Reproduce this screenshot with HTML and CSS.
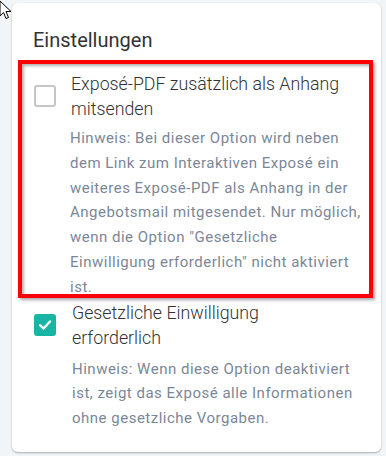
FILE: index.html
```html
<!DOCTYPE html>
<html lang="de">
<head>
    <meta charset="UTF-8">
    <meta name="viewport" content="width=device-width, initial-scale=1.0">
    <title>Einstellungen</title>
    <link rel="stylesheet" href="styles.css">
</head>
<body>
    <svg class="cursor" width="14" height="20" viewBox="0 0 14 20">
        <path d="M1 1 L1 16 L4.5 12.5 L7 18.5 L9.5 17.5 L7 11.5 L12 11.5 Z" fill="#fff" stroke="#000" stroke-width="1"/>
    </svg>

    <div class="card">
        <h2 class="card-title">Einstellungen</h2>

        <div class="option highlighted">
            <label class="option-row">
                <span class="checkbox"></span>
                <span class="option-label">Exposé-PDF zusätzlich als Anhang mitsenden</span>
            </label>
            <p class="option-hint">Hinweis: Bei dieser Option wird neben dem Link zum Interaktiven Exposé ein weiteres Exposé-PDF als Anhang in der Angebotsmail mitgesendet. Nur möglich, wenn die Option "Gesetzliche Einwilligung erforderlich" nicht aktiviert ist.</p>
        </div>

        <div class="option second">
            <label class="option-row">
                <span class="checkbox checked">
                    <svg width="14" height="14" viewBox="0 0 14 14"><path d="M2 7.2 L5.5 10.5 L12 3.5" fill="none" stroke="#fff" stroke-width="2.4" stroke-linecap="round" stroke-linejoin="round"/></svg>
                </span>
                <span class="option-label narrow">Gesetzliche Einwilligung erforderlich</span>
            </label>
            <p class="option-hint">Hinweis: Wenn diese Option deaktiviert ist, zeigt das Exposé alle Informationen ohne gesetzliche Vorgaben.</p>
        </div>
    </div>
</body>
</html>
```

FILE: styles.css
```css
body {
    margin: 0;
    padding: 3px 5px 7px 12px;
    font-family: Roboto, "Liberation Sans", sans-serif;
    background-color: #f1f5f8;
}

.cursor {
    position: absolute;
    left: -1px;
    top: 0;
}

.card {
    background: white;
    border-radius: 6px;
    padding: 25px 17px 21px 22px;
    box-shadow: 0 1px 2px rgba(0,0,0,0.3);
}

.card-title {
    margin: 0 0 19px -1px;
    font-size: 20px;
    line-height: 24px;
    font-weight: 400;
    color: #333;
}

.option {
    position: relative;
}

.highlighted::after {
    content: "";
    position: absolute;
    left: -16px;
    right: -9px;
    top: -11px;
    bottom: 2px;
    border: 4px solid #ff0000;
    box-shadow: 2px 2px 3px rgba(0,0,0,0.35), inset 2px 2px 3px rgba(0,0,0,0.3);
    pointer-events: none;
}

.option-row {
    display: flex;
    align-items: center;
    gap: 15px;
}

.second .option-row {
    gap: 16px;
}

.checkbox {
    flex: none;
    width: 18px;
    height: 18px;
    border: 2px solid #c6c6c6;
    border-radius: 3px;
    display: flex;
    align-items: center;
    justify-content: center;
}

.checkbox.checked {
    background: #1ab4a5;
    border-color: #1ab4a5;
}

.option-label {
    font-size: 17.8px;
    line-height: 25px;
    font-weight: 300;
    color: #333;
}

.option-label.narrow {
    max-width: 240px;
}

.option-hint {
    margin: 5px 0 0 36px;
    font-size: 15px;
    letter-spacing: 0.5px;
    line-height: 24.8px;
    color: #7b8796;
}

.second .option-hint {
    margin: 7px 0 0 38px;
}
```
